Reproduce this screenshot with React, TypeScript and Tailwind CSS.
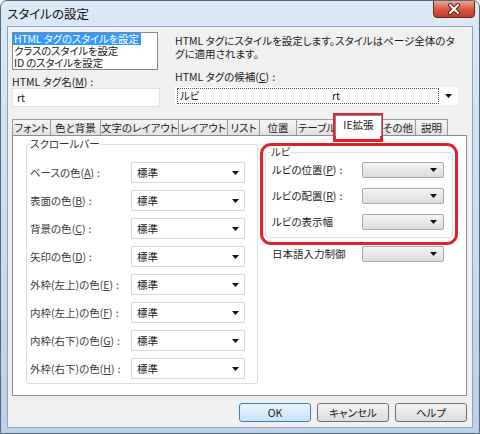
import React from 'react';

const Arrow = () => (
  <svg width="7" height="4" viewBox="0 0 7 4" className="shrink-0">
    <path d="M0 0h7L3.5 4z" fill="#111" />
  </svg>
);

function Mn({ label, k, tail = ':' }: { label: string; k?: string; tail?: string }) {
  return (
    <span className="whitespace-nowrap">
      {label}
      {k && (
        <>
          (<u className="underline-offset-1">{k}</u>)
        </>
      )}
      {tail && <span className="ml-[3px]">{tail}</span>}
    </span>
  );
}

function WhiteSelect() {
  return (
    <div className="w-[114px] h-[21px] flex items-center justify-between bg-white border border-[#dadada] pl-[5px] pr-[5px]">
      <span>標準</span>
      <Arrow />
    </div>
  );
}

function GraySelect() {
  return (
    <div className="w-[82px] h-[16px] flex items-center justify-end bg-linear-to-b from-[#f4f4f4] to-[#dcdcdc] border border-[#a9a9a9] rounded-[2px] pr-[6px]">
      <Arrow />
    </div>
  );
}

const scrollRows = [
  { label: 'ベースの色', k: 'A' },
  { label: '表面の色', k: 'B' },
  { label: '背景の色', k: 'C' },
  { label: '矢印の色', k: 'D' },
  { label: '外枠(左上)の色', k: 'E' },
  { label: '内枠(左上)の色', k: 'F' },
  { label: '内枠(右下)の色', k: 'G' },
  { label: '外枠(右下)の色', k: 'H' },
];

const tabs = [
  { name: 'フォント', w: 'w-[38px]' },
  { name: '色と背景', w: 'w-[50px]' },
  { name: '文字のレイアウト', w: 'w-[78px]' },
  { name: 'レイアウト', w: 'w-[49px]' },
  { name: 'リスト', w: 'w-[32px]' },
  { name: '位置', w: 'w-[37px]' },
  { name: 'テーブル', w: 'w-[41px]' },
  { name: 'IE拡張', w: 'w-[47px]', active: true },
  { name: 'その他', w: 'w-[35px]' },
  { name: '説明', w: 'w-[33px]' },
];

export default function App() {
  return (
    <div className="w-[480px] h-[434px] flex flex-col overflow-hidden border border-[#56677a] rounded-t-[7px] bg-linear-to-b from-[#dde9f6] via-[#cadcef] to-[#bbd1e9] px-[7px] pb-[6px] font-['Noto_Sans_CJK_JP',sans-serif] [font-feature-settings:'palt'] text-[10.5px] leading-[12px] text-[#1b1b1b]">
      {/* title bar */}
      <div className="h-[26px] -mx-[7px] flex items-start">
        <span className="pl-[6px] pt-[6px] text-[12.5px] leading-[14px] text-[#111]">スタイルの設定</span>
        <div className="ml-auto mr-[4px] -mt-px w-[42px] h-[18px] flex items-center justify-center rounded-b-[4px] border border-[#6b2318] bg-linear-to-b from-[#eaa898] via-[#d35a47] to-[#c13b28]">
          <svg width="14" height="12" viewBox="0 0 14 12">
            <path d="M3 2l8 8M11 2l-8 8" stroke="#5a1d14" strokeWidth="4" strokeLinecap="round" />
            <path d="M3 2l8 8M11 2l-8 8" stroke="#fff" strokeWidth="2.2" strokeLinecap="round" />
          </svg>
        </div>
      </div>

      {/* client area */}
      <div className="relative h-[400px] bg-[#f0f0f0] ring-1 ring-[#8ea4bc]">
        <div className="flex h-[88px]">
          <div className="ml-[4px] w-[146px] pt-[5px]">
            <div className="h-[38px] bg-white border border-[#828790] flex flex-col leading-[12px] whitespace-nowrap overflow-hidden tracking-[-0.2px]">
              <span className="self-start bg-[#3399ff] text-white pl-[1px] pr-[2px]">HTML タグのスタイルを設定</span>
              <span className="pl-[1px]">クラスのスタイルを設定</span>
              <span className="pl-[1px]">ID のスタイルを設定</span>
            </div>
            <div className="mt-[6px] h-[12px]">
              <Mn label="HTML タグ名" k="M" />
            </div>
            <div className="h-[19px] w-[148px] bg-white border border-[#e2e2e2] flex items-center pl-[4px]">rt</div>
          </div>
          <div className="ml-[17px] w-[283px] pt-[7px]">
            <p className="whitespace-nowrap leading-[13px]">
              HTML タグにスタイルを設定します。スタイルはページ全体のタ
              <br />
              グに適用されます。
            </p>
            <div className="mt-[11px] h-[12px]">
              <Mn label="HTML タグの候補" k="C" />
            </div>
            <div className="mt-[4px] h-[18px] bg-white flex items-center">
              <div className="ml-[2px] w-[262px] h-[16px] border border-dotted border-[#555] flex items-center pl-[2px]">
                <span className="w-[152px]">ルビ</span>
                <span>rt</span>
              </div>
              <div className="ml-auto mr-[6px]">
                <Arrow />
              </div>
            </div>
          </div>
        </div>

        {/* tabs */}
        <div className="flex items-end h-[20px] pl-[4px]">
          {tabs.map((t, i) =>
            t.active ? (
              <div
                key={t.name}
                className={`${t.w} h-[21px] -mb-px -mx-[2px] relative z-10 bg-white border-x border-t border-[#898c95] flex items-center justify-center pb-[2px]`}
              >
                {t.name}
              </div>
            ) : (
              <div
                key={t.name}
                className={`${t.w} h-[16px] bg-linear-to-b from-[#f5f5f5] to-[#e2e2e2] border-t border-l border-[#989aa0] flex items-center justify-center whitespace-nowrap ${i === tabs.length - 1 ? 'border-r' : ''}`}
              >
                {t.name}
              </div>
            )
          )}
        </div>

        {/* panel */}
        <div className="relative ml-[4px] w-[455px] h-[261px] bg-white border border-[#898c95] flex items-start pl-[13px] pt-[8px]">
          <div className="relative w-[232px] border border-[#d5dfe5] rounded-[3px] pt-[17px] pb-[4px] pl-[3px] flex flex-col gap-[7px]">
            <span className="absolute left-[2px] -top-[7px] bg-white px-[1px] leading-[12px] text-[#333]">スクロールバー</span>
            {scrollRows.map((r) => (
              <div key={r.k} className="flex items-center h-[21px]">
                <span className="w-[101px] text-[#3c3c3c]">
                  <Mn label={r.label} k={r.k} />
                </span>
                <WhiteSelect />
              </div>
            ))}
          </div>

          <div className="ml-[7px] mt-[8px] flex flex-col">
            <div className="relative w-[188px] border border-[#d5dfe5] rounded-[3px] pt-[9px] pb-[7px] pl-[6px] flex flex-col gap-[10px]">
              <span className="absolute left-[4px] -top-[7px] bg-white px-[1px] leading-[12px] text-[#333]">ルビ</span>
              <div className="flex items-center h-[16px]">
                <span className="w-[90px]"><Mn label="ルビの位置" k="P" /></span>
                <GraySelect />
              </div>
              <div className="flex items-center h-[16px]">
                <span className="w-[90px]"><Mn label="ルビの配置" k="R" /></span>
                <GraySelect />
              </div>
              <div className="flex items-center h-[16px]">
                <span className="w-[90px]">ルビの表示幅</span>
                <GraySelect />
              </div>
            </div>
            <div className="mt-[8px] pl-[7px] flex items-center h-[16px]">
              <span className="w-[90px]">日本語入力制御</span>
              <GraySelect />
            </div>
          </div>

          {/* highlight around the ruby group */}
          <div className="absolute left-[247px] top-[7px] w-[198px] h-[102px] border-[3px] border-[#e3202b] rounded-[11px] pointer-events-none" />
        </div>

        {/* buttons */}
        <div className="flex justify-end gap-[6px] pr-[5px] mt-[7px]">
          <button className="w-[72px] h-[19px] rounded-[3px] border border-[#3c7fb1] bg-linear-to-b from-[#eaf5fd] to-[#c8e3f7] leading-[12px]">OK</button>
          <button className="w-[72px] h-[19px] rounded-[3px] border border-[#707070] bg-linear-to-b from-[#f4f4f4] to-[#dcdcdc] leading-[12px]">キャンセル</button>
          <button className="w-[72px] h-[19px] rounded-[3px] border border-[#707070] bg-linear-to-b from-[#f4f4f4] to-[#dcdcdc] leading-[12px]">ヘルプ</button>
        </div>

        {/* highlight around the active tab */}
        <div className="absolute left-[325px] top-[86px] w-[50px] h-[29px] border-[3px] border-[#e3202b] pointer-events-none" />
      </div>
    </div>
  );
}
